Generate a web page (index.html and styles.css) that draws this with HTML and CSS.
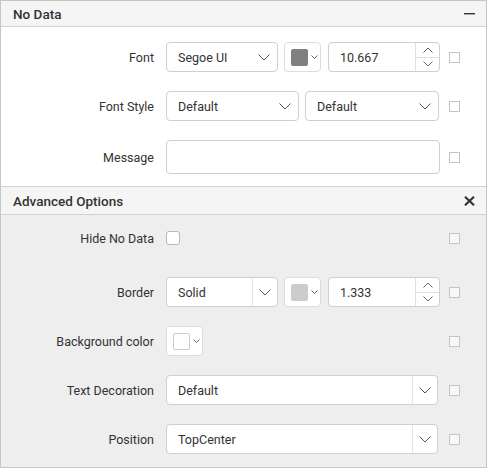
FILE: index.html
```html
<!DOCTYPE html>
<html>
<head>
<meta charset="utf-8">
<link rel="stylesheet" href="styles.css">
</head>
<body>
<div class="panel">
  <div class="header">
    <span class="title">No Data</span>
    <svg class="hicon" width="11" height="2" viewBox="0 0 11 2"><rect x="0" y="0" width="11" height="1.4" fill="#333"/></svg>
  </div>
  <div class="body body-white">
    <div class="row">
      <div class="label">Font</div>
      <div class="controls">
        <div class="dd w112"><span class="dd-text">Segoe UI</span><span class="dd-arrow"><svg width="12" height="7" viewBox="0 0 12 7"><path d="M0.5 0.5 L6 6 L11.5 0.5" fill="none" stroke="#555" stroke-width="1"/></svg></span></div>
        <div class="cp"><span class="sw sw-gray"></span><svg width="7" height="4" viewBox="0 0 7 4"><path d="M0.5 0.5 L3.5 3.5 L6.5 0.5" fill="none" stroke="#666" stroke-width="1"/></svg></div>
        <div class="num"><span class="num-text">10.667</span><span class="spin"><span class="sp"><svg width="10" height="6" viewBox="0 0 10 6"><path d="M0.5 5.5 L5 1 L9.5 5.5" fill="none" stroke="#666" stroke-width="1"/></svg></span><span class="sp sp-b"><svg width="10" height="6" viewBox="0 0 10 6"><path d="M0.5 0.5 L5 5 L9.5 0.5" fill="none" stroke="#666" stroke-width="1"/></svg></span></span></div>
      </div>
      <span class="cb"></span>
    </div>
    <div class="row">
      <div class="label">Font Style</div>
      <div class="controls">
        <div class="dd w133"><span class="dd-text">Default</span><span class="dd-arrow"><svg width="12" height="7" viewBox="0 0 12 7"><path d="M0.5 0.5 L6 6 L11.5 0.5" fill="none" stroke="#555" stroke-width="1"/></svg></span></div>
        <div class="dd w134"><span class="dd-text">Default</span><span class="dd-arrow"><svg width="12" height="7" viewBox="0 0 12 7"><path d="M0.5 0.5 L6 6 L11.5 0.5" fill="none" stroke="#555" stroke-width="1"/></svg></span></div>
      </div>
      <span class="cb"></span>
    </div>
    <div class="row row-msg">
      <div class="label">Message</div>
      <div class="controls">
        <div class="input"></div>
      </div>
      <span class="cb"></span>
    </div>
  </div>
  <div class="header header-adv">
    <span class="title">Advanced Options</span>
    <svg class="hicon" width="11" height="10" viewBox="0 0 11 10"><path d="M1 0.8 L10 9.2 M10 0.8 L1 9.2" stroke="#333" stroke-width="2.2"/></svg>
  </div>
  <div class="body body-gray">
    <div class="row row-hide">
      <div class="label">Hide No Data</div>
      <div class="controls">
        <span class="check"></span>
      </div>
      <span class="cb"></span>
    </div>
    <div class="row">
      <div class="label">Border</div>
      <div class="controls">
        <div class="dd w112 split"><span class="dd-text">Solid</span><span class="dd-arrow"><svg width="12" height="7" viewBox="0 0 12 7"><path d="M0.5 0.5 L6 6 L11.5 0.5" fill="none" stroke="#555" stroke-width="1"/></svg></span></div>
        <div class="cp"><span class="sw sw-light"></span><svg width="7" height="4" viewBox="0 0 7 4"><path d="M0.5 0.5 L3.5 3.5 L6.5 0.5" fill="none" stroke="#666" stroke-width="1"/></svg></div>
        <div class="num"><span class="num-text">1.333</span><span class="spin"><span class="sp"><svg width="10" height="6" viewBox="0 0 10 6"><path d="M0.5 5.5 L5 1 L9.5 5.5" fill="none" stroke="#666" stroke-width="1"/></svg></span><span class="sp sp-b"><svg width="10" height="6" viewBox="0 0 10 6"><path d="M0.5 0.5 L5 5 L9.5 0.5" fill="none" stroke="#666" stroke-width="1"/></svg></span></span></div>
      </div>
      <span class="cb"></span>
    </div>
    <div class="row">
      <div class="label">Background color</div>
      <div class="controls">
        <div class="cp"><span class="sw sw-white"></span><svg width="7" height="4" viewBox="0 0 7 4"><path d="M0.5 0.5 L3.5 3.5 L6.5 0.5" fill="none" stroke="#666" stroke-width="1"/></svg></div>
      </div>
      <span class="cb"></span>
    </div>
    <div class="row">
      <div class="label">Text Decoration</div>
      <div class="controls">
        <div class="dd w272 split"><span class="dd-text">Default</span><span class="dd-arrow"><svg width="12" height="7" viewBox="0 0 12 7"><path d="M0.5 0.5 L6 6 L11.5 0.5" fill="none" stroke="#555" stroke-width="1"/></svg></span></div>
      </div>
      <span class="cb"></span>
    </div>
    <div class="row">
      <div class="label">Position</div>
      <div class="controls">
        <div class="dd w272 split"><span class="dd-text">TopCenter</span><span class="dd-arrow"><svg width="12" height="7" viewBox="0 0 12 7"><path d="M0.5 0.5 L6 6 L11.5 0.5" fill="none" stroke="#555" stroke-width="1"/></svg></span></div>
      </div>
      <span class="cb"></span>
    </div>
  </div>
</div>
</body>
</html>
```

FILE: styles.css
```css
* { box-sizing: border-box; }
html, body { margin: 0; padding: 0; background: #ffffff; }
body {
  font-family: Roboto, "Liberation Sans", Arial, sans-serif;
  font-size: 12.5px;
  color: #333333;
}
.panel {
  width: 487px;
  height: 468px;
  border: 1px solid #c6c6c6;
  display: flex;
  flex-direction: column;
  background: #eeeeee;
}
.header {
  height: 26px;
  flex: none;
  background: #f5f5f5;
  border-bottom: 1px solid #d2d2d2;
  display: flex;
  align-items: center;
  justify-content: space-between;
  padding: 0 11px 0 12px;
}
.header-adv {
  height: 29px;
  border-top: 1px solid #d2d2d2;
}
.title {
  font-size: 13.5px;
  font-weight: 500;
  color: #333333;
}
.hicon { display: block; }
.body { flex: none; }
.body-white {
  background: #ffffff;
  padding: 15px 0 12px;
  display: flex;
  flex-direction: column;
  gap: 19px;
}
.body-gray {
  flex: 1;
  background: #eeeeee;
  padding: 8px 0 0;
  display: flex;
  flex-direction: column;
  gap: 19px;
}
.row {
  height: 30px;
  display: flex;
  align-items: center;
}
.row-msg { height: 34px; }
.row-hide { margin-bottom: 5px; }
.label {
  width: 153px;
  flex: none;
  text-align: right;
  color: #333333;
}
.controls {
  width: 274px;
  flex: none;
  margin-left: 12px;
  display: flex;
  align-items: center;
  gap: 6px;
  height: 100%;
}
.cb {
  width: 11px;
  height: 11px;
  border: 1px solid #c4c4c4;
  background: #ffffff;
  margin-left: 9px;
  flex: none;
}
.body-gray .cb { background: #f8f8f8; }
.dd {
  height: 30px;
  background: #ffffff;
  border: 1px solid #cfcfcf;
  border-radius: 4px;
  display: flex;
  align-items: center;
  justify-content: space-between;
  flex: none;
}
.w112 { width: 112px; }
.w133 { width: 133px; }
.w134 { width: 134px; }
.w272 { width: 272px; }
.dd-text {
  padding-left: 11px;
  color: #333333;
}
.dd-arrow {
  width: 25px;
  height: 100%;
  display: flex;
  align-items: center;
  justify-content: center;
  padding-right: 2px;
}
.split .dd-arrow {
  border-left: 1px solid #e4e4e4;
  padding-right: 0;
}
.cp {
  width: 37px;
  height: 30px;
  background: #ffffff;
  border: 1px solid #dcdcdc;
  border-radius: 4px;
  display: flex;
  align-items: center;
  padding-left: 6px;
  gap: 3px;
  flex: none;
}
.sw {
  width: 17px;
  height: 17px;
  border-radius: 2px;
  display: block;
}
.sw-gray { background: #808080; }
.sw-light { background: #cccccc; }
.sw-white { background: #ffffff; border: 1px solid #cccccc; }
.num {
  width: 112px;
  height: 30px;
  background: #ffffff;
  border: 1px solid #cfcfcf;
  border-radius: 4px;
  display: flex;
  align-items: center;
  justify-content: space-between;
  margin-left: 1px;
  flex: none;
}
.num-text { padding-left: 11px; color: #333333; }
.spin {
  width: 24px;
  height: 100%;
  border-left: 1px solid #e0e0e0;
  display: flex;
  flex-direction: column;
}
.sp {
  flex: 1;
  display: flex;
  align-items: center;
  justify-content: center;
}
.sp-b { border-top: 1px solid #e0e0e0; }
.input {
  width: 274px;
  height: 34px;
  background: #ffffff;
  border: 1px solid #cfcfcf;
  border-radius: 4px;
}
.check {
  width: 14px;
  height: 14px;
  background: #ffffff;
  border: 1px solid #b8b8b8;
  border-radius: 3px;
}
```
